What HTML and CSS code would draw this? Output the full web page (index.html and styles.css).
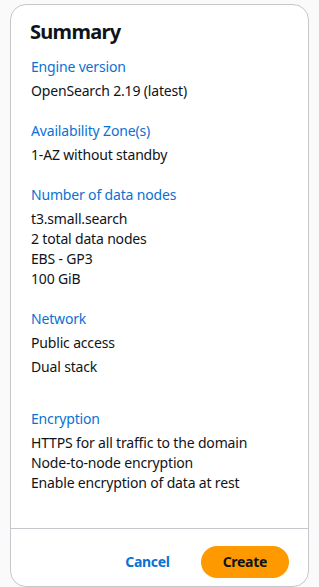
FILE: index.html
```html
<!DOCTYPE html>
<html lang="en">
<head>
    <meta charset="UTF-8">
    <meta name="viewport" content="width=device-width, initial-scale=1.0">
    <title>Summary</title>
    <link rel="stylesheet" href="styles.css">
</head>
<body>

    <div class="card">
        <div class="card-body">
            <h2>Summary</h2>

            <div class="section">
                <div class="label">Engine version</div>
                <div class="value">OpenSearch 2.19 (latest)</div>
            </div>

            <div class="section">
                <div class="label">Availability Zone(s)</div>
                <div class="value">1-AZ without standby</div>
            </div>

            <div class="section">
                <div class="label">Number of data nodes</div>
                <div class="value">
                    t3.small.search<br>
                    2 total data nodes<br>
                    EBS - GP3<br>
                    100 GiB
                </div>
            </div>

            <div class="section section-wide">
                <div class="label">Network</div>
                <div class="value">Public access</div>
                <div class="value">Dual stack</div>
            </div>

            <div class="section">
                <div class="label">Encryption</div>
                <div class="value">
                    HTTPS for all traffic to the domain<br>
                    Node-to-node encryption<br>
                    Enable encryption of data at rest
                </div>
            </div>
        </div>

        <div class="card-footer">
            <button class="btn link-btn">Cancel</button>
            <button class="btn primary-btn">Create</button>
        </div>
    </div>

</body>
</html>
```

FILE: styles.css
```css
body {
    margin: 0;
    background: #fafafa;
    font-family: "Noto Sans", "Open Sans", sans-serif;
    color: #0f141a;
    letter-spacing: -0.17px;
}

.card {
    margin: 4px 10px 0;
    background: white;
    border: 1px solid #c6c6cd;
    border-radius: 16px;
}

.card-body {
    padding: 15px 20px 35px;
}

h2 {
    margin: 0 0 13px -1px;
    font-size: 20px;
    line-height: 24px;
    font-weight: bold;
    letter-spacing: -0.7px;
}

.section { margin-bottom: 20px; }
.section:last-child { margin-bottom: 0; }
.section-wide { margin-bottom: 32px; }

.label {
    color: #0972d3;
    font-size: 14px;
    line-height: 20px;
}

.value {
    margin-top: 4px;
    font-size: 14px;
    line-height: 20px;
}

.card-footer {
    display: flex;
    justify-content: flex-end;
    align-items: center;
    gap: 31px;
    padding: 17px 19px 8px;
    border-top: 1px solid #c6c6cd;
}

.btn {
    font-family: inherit;
    font-size: 14px;
    font-weight: bold;
    line-height: 20px;
    letter-spacing: -0.3px;
    border: none;
    cursor: pointer;
}

.link-btn {
    background: none;
    color: #0972d3;
    padding: 6px 0;
}

.primary-btn {
    background: #ff9900;
    color: #0f141a;
    padding: 6px 22px;
    border-radius: 20px;
}
```
